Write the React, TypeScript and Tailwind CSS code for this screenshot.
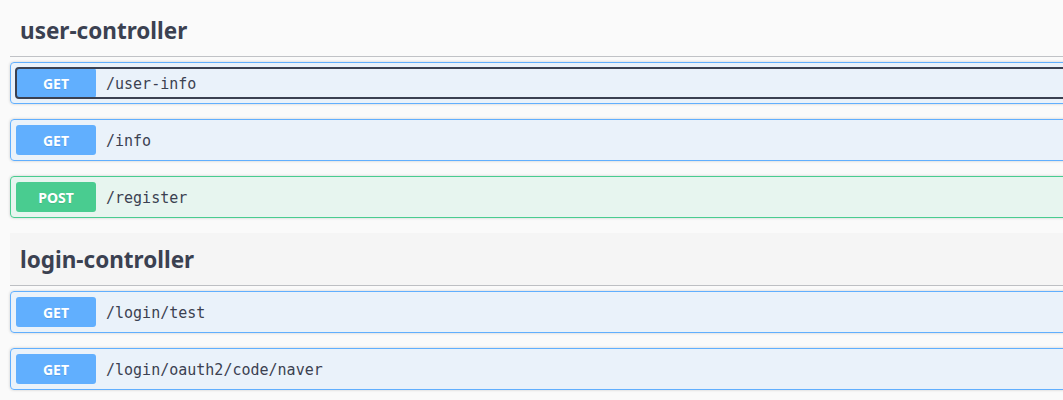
import React from "react";

type Op = { method: "GET" | "POST"; path: string; focused?: boolean };

const sans = "font-['Noto_Sans','Open_Sans',sans-serif]";

function OpBlock({ op }: { op: Op }) {
  const isGet = op.method === "GET";
  return (
    <div
      className={`mb-[15px] rounded-[4px] border shadow-[0_0_3px_rgba(0,0,0,0.19)] ${
        isGet
          ? "border-[#61affe] bg-[rgba(97,175,254,0.1)]"
          : "border-[#49cc90] bg-[rgba(73,204,144,0.1)]"
      }`}
    >
      <div className="p-[5px]">
        <div
          className={`flex items-center h-[30px] rounded-[3px] ${
            op.focused ? "outline-2 outline-solid outline-[#3b4151] -outline-offset-1" : ""
          }`}
        >
          <span
            className={`${sans} flex items-center justify-center w-[80px] h-[30px] rounded-[3px] text-[14px] font-bold text-white [text-shadow:0_1px_0_rgba(0,0,0,0.1)] ${
              isGet ? "bg-[#61affe]" : "bg-[#49cc90]"
            }`}
          >
            {op.method}
          </span>
          <span className="pl-[10px] pt-[2px] font-['DejaVu_Sans_Mono',monospace] text-[15px] text-[#3b4151]">
            {op.path}
          </span>
        </div>
      </div>
    </div>
  );
}

function Tag({ name, hover }: { name: string; hover?: boolean }) {
  return (
    <h3
      className={`${sans} mb-[5px] flex items-center h-[53px] pt-[2px] border-b border-[rgba(59,65,81,0.3)] pl-[10px] text-[22.5px] font-bold text-[#3b4151] ${
        hover ? "bg-[rgba(0,0,0,0.02)]" : ""
      }`}
    >
      {name}
    </h3>
  );
}

export default function App() {
  const sections: { name: string; hover?: boolean; ops: Op[] }[] = [
    {
      name: "user-controller",
      ops: [
        { method: "GET", path: "/user-info", focused: true },
        { method: "GET", path: "/info" },
        { method: "POST", path: "/register" },
      ],
    },
    {
      name: "login-controller",
      hover: true,
      ops: [
        { method: "GET", path: "/login/test" },
        { method: "GET", path: "/login/oauth2/code/naver" },
      ],
    },
  ];
  return (
    <div className="w-[1063px] h-[400px] overflow-hidden bg-[#fafafa]">
      <div className="w-[1100px] pl-[10px] pt-[4px]">
        {sections.map((s) => (
          <div key={s.name}>
            <Tag name={s.name} hover={s.hover} />
            {s.ops.map((op) => (
              <OpBlock key={op.path} op={op} />
            ))}
          </div>
        ))}
      </div>
    </div>
  );
}
